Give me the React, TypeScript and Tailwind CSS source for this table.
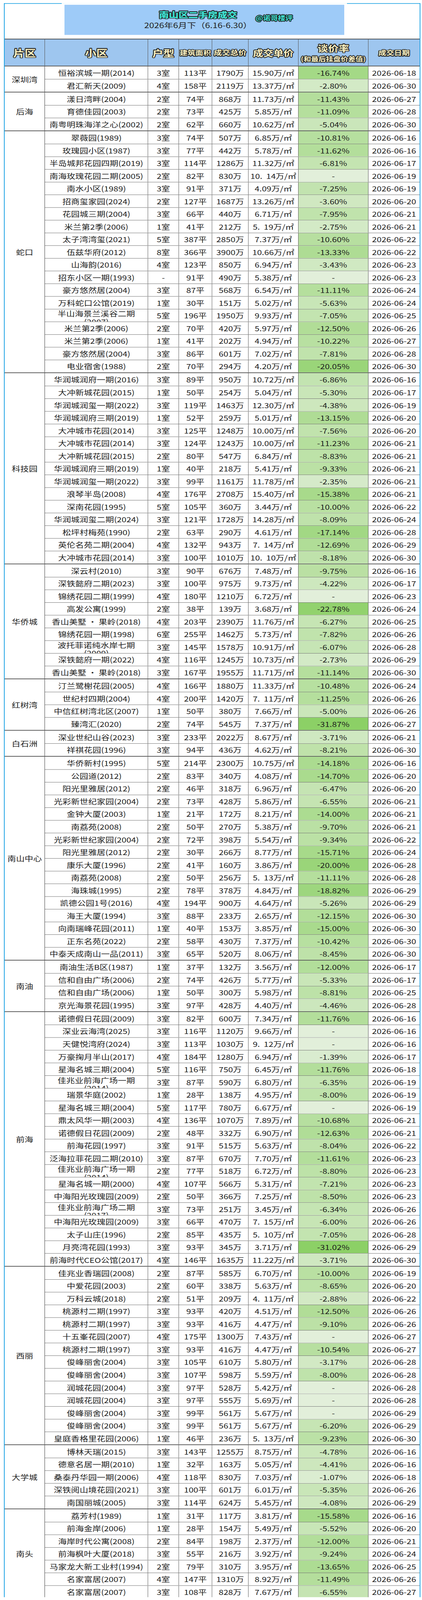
import clsx from "clsx";

// 片区 -> rows: 小区|户型|面积|总价|单价|谈价率|日
const GROUPS: { area: string; rows: string }[] = [
  {
    area: "深圳湾",
    rows: `
恒裕滨城一期(2014)|3室|113|1790|15.90|-16.74%|18
君汇新天(2009)|4室|158|2119|13.37|-2.80%|30`,
  },
  {
    area: "后海",
    rows: `
漾日湾畔(2004)|2室|74|868|11.73|-11.43%|27
育德佳园(2003)|2室|73|425|5.85|-11.09%|28
南粤明珠海洋之心(2002)|2室|62|660|10.62|-5.04%|30`,
  },
  {
    area: "蛇口",
    rows: `
翠薇园(1989)|3室|74|507|6.85|-10.81%|16
玫瑰园小区(1987)|3室|77|442|5.78|-11.62%|16
半岛城邦花园四期(2019)|3室|114|1286|11.32|-6.81%|17
南海玫瑰花园二期(2005)|2室|82|830|10.  14|-|19
南水小区(1989)|3室|91|371|4.09|-7.25%|19
招商玺家园(2024)|2室|127|1687|13.26|-3.60%|20
花园城三期(2004)|3室|66|440|6.71|-7.95%|21
米兰第2季(2006)|1室|41|212|5.  19|-2.75%|21
太子湾湾玺(2021)|5室|387|2850|7.37|-10.60%|22
伍兹华府(2012)|8室|366|3900|10.66|-13.33%|22
山海韵(2016)|4室|123|850|6.94|-3.43%|23
招东小区一期(1993)|-|91|490|5.38|-|23
豪方悠然居(2004)|3室|87|568|6.54|-11.11%|24
万科蛇口公馆(2019)|1室|30|151|5.02|-5.63%|24
半山海景兰溪谷二期(2007)|5室|196|1950|9.93|-7.05%|25
米兰第2季(2006)|2室|70|420|5.97|-12.50%|26
米兰第2季(2006)|1室|41|202|4.94|-10.22%|27
豪方悠然居(2004)|3室|86|601|7.02|-7.81%|28
电业宿舍(1988)|2室|70|294|4.20|-20.05%|30`,
  },
  {
    area: "科技园",
    rows: `
华润城润府一期(2016)|3室|89|950|10.72|-6.86%|16
大冲新城花园(2015)|1室|50|254|5.04|-5.30%|17
华润城润玺一期(2022)|3室|119|1463|12.30|-4.38%|19
华润城润府三期(2019)|1室|52|259|5.01|-13.15%|20
大冲城市花园(2014)|3室|125|1248|10.00|-7.56%|20
大冲城市花园(2014)|3室|124|1243|10.00|-11.23%|21
大冲新城花园(2015)|2室|80|547|6.84|-8.83%|21
华润城润府三期(2019)|1室|40|218|5.41|-9.33%|21
华润城润玺一期(2022)|3室|99|1161|11.78|-2.35%|21
浪琴半岛(2008)|4室|176|2708|15.40|-15.38%|21
深南花园(1995)|5室|105|360|3.44|-10.00%|22
华润城润玺二期(2024)|3室|121|1728|14.28|-8.09%|24
松坪村梅苑(1990)|2室|63|290|4.61|-17.14%|28
英伦名苑二期(2004)|4室|132|943|7.  14|-12.69%|29
大冲城市花园(2014)|3室|100|1010|10.  10|-8.18%|30`,
  },
  {
    area: "华侨城",
    rows: `
深云村(2010)|3室|90|676|7.48|-9.75%|16
深铁懿府二期(2023)|3室|100|975|9.73|-4.22%|17
锦绣花园二期(1999)|4室|180|1210|6.72|-|23
高发公寓(1999)|2室|38|139|3.68|-22.78%|24
香山美墅 · 果岭(2018)|4室|203|2390|11.76|-6.27%|25
锦绣花园一期(1998)|6室|255|1462|5.73|-7.82%|26
波托菲诺纯水岸七期(2009)|3室|145|1578|10.91|-6.07%|28
深铁懿府一期(2022)|4室|116|1245|10.73|-2.73%|29
香山美墅 · 果岭(2018)|3室|167|1955|11.71|-11.14%|30`,
  },
  {
    area: "红树湾",
    rows: `
汀兰鹭榭花园(2005)|4室|166|1880|11.33|-10.48%|24
世纪村四期(2004)|4室|200|1420|7.  11|-11.25%|26
中信红树湾北区(2007)|1室|50|380|7.66|-5.00%|26
臻湾汇(2020)|2室|74|545|7.37|-31.87%|27`,
  },
  {
    area: "白石洲",
    rows: `
深业世纪山谷(2023)|3室|233|2022|8.67|-3.71%|21
祥祺花园(1996)|3室|94|436|4.62|-8.21%|30`,
  },
  {
    area: "南山中心",
    rows: `
华侨新村(1995)|5室|214|2300|10.75|-14.18%|16
公园道(2012)|2室|83|340|4.08|-14.70%|20
阳光里雅居(2012)|2室|46|318|6.96|-6.47%|20
光彩新世纪家园(2004)|2室|73|428|5.86|-6.55%|21
金钟大厦(2003)|1室|21|172|8.21|-14.00%|21
南荔苑(2008)|2室|50|270|5.38|-9.70%|21
光彩新世纪家园(2004)|2室|72|398|5.54|-9.34%|22
阳光里雅居(2012)|2室|30|266|8.77|-15.71%|24
康乐大厦(1996)|2室|41|160|3.86|-20.00%|28
南荔苑(2008)|2室|50|256|5.  13|-11.11%|28
海珠城(1995)|2室|78|378|4.84|-18.82%|29
凯德公园1号(2016)|4室|194|900|4.64|-5.26%|29
海王大厦(1994)|3室|88|233|2.65|-12.15%|30
向南瑞峰花园(2011)|1室|40|153|3.85|-15.00%|30
正东名苑(2022)|2室|58|430|7.37|-10.42%|30
中泰天成南山一品(2011)|3室|65|520|8.06|-8.45%|30`,
  },
  {
    area: "南油",
    rows: `
南油生活B区(1987)|1室|37|132|3.56|-12.00%|17
信和自由广场(2006)|2室|74|426|5.77|-5.33%|17
信和自由广场(2006)|1室|50|300|5.98|-8.81%|25
京光海景花园(1995)|3室|97|428|4.40|-4.46%|28`,
  },
  {
    area: "前海",
    rows: `
诺德假日花园(2009)|3室|82|600|7.34|-11.76%|16
深业云海湾(2025)|3室|116|1120|9.66|-|16
天健悦湾府(2024)|3室|113|1030|9.  12|-|16
万豪掬月半山(2017)|4室|184|1280|6.94|-1.39%|17
星海名城三期(2004)|5室|116|750|6.45|-11.76%|18
佳兆业前海广场一期(2014)|3室|87|590|6.80|-6.35%|19
瑞景华庭(2002)|1室|28|138|4.95|-8.00%|19
星海名城三期(2004)|5室|117|780|6.67|-|19
鼎太风华一期(2003)|4室|136|1070|7.89|-10.68%|21
诺德假日花园(2009)|2室|48|332|6.90|-12.63%|21
前海花园(1997)|3室|91|515|5.63|-8.04%|22
泛海拉菲花园二期(2010)|3室|87|670|7.70|-11.61%|23
佳兆业前海广场一期(2014)|2室|77|518|6.72|-8.80%|23
星海名城一期(2000)|4室|107|566|5.31|-7.21%|23
中海阳光玫瑰园(2009)|2室|50|366|7.25|-8.50%|23
佳兆业前海广场二期(2017)|3室|73|251|3.45|-6.34%|26
中海阳光玫瑰园(2009)|3室|66|470|7.  15|-6.00%|26
太子山庄(1996)|2室|85|435|5.  10|-7.05%|28
月亮湾花园(1993)|3室|93|345|3.71|-31.02%|29
前海时代CEO公馆(2017)|4室|146|1635|11.22|-3.71%|30`,
  },
  {
    area: "西丽",
    rows: `
佳兆业香瑞园(2008)|2室|87|585|6.70|-10.00%|19
中爱花园(2003)|2室|60|338|5.63|-8.65%|20
万科云城(2018)|2室|51|209|4.  11|-2.88%|22
桃源村二期(1997)|3室|93|420|4.51|-12.50%|26
桃源村二期(1997)|3室|93|416|4.47|-9.10%|26
十五峯花园(2007)|4室|175|1300|7.43|-|27
桃源村二期(1997)|3室|93|416|4.47|-10.54%|27
俊峰丽舍(2004)|3室|105|610|5.80|-3.17%|28
俊峰丽舍(2004)|3室|107|598|5.59|-8.00%|28
润城花园(2004)|3室|97|528|5.42|-|28
润城花园(2004)|3室|97|555|5.69|-|28
俊峰丽舍(2004)|3室|99|561|5.67|-|29
俊峰丽舍(2004)|3室|99|561|5.67|-6.20%|29
皇庭香格里花园(2006)|1室|46|236|5.  13|-9.23%|30`,
  },
  {
    area: "大学城",
    rows: `
博林天瑞(2015)|3室|143|1255|8.75|-4.78%|16
德意名居一期(2010)|1室|32|163|5.05|-4.41%|16
桑泰丹华园一期(2006)|4室|118|830|7.03|-1.07%|18
深铁阅山境花园(2021)|3室|100|601|6.01|-5.35%|26
南国丽城(2005)|3室|114|624|5.45|-4.08%|29`,
  },
  {
    area: "南头",
    rows: `
荔芳村(1989)|1室|31|117|3.81|-15.58%|16
前海金岸(2006)|1室|28|154|5.49|-5.52%|20
海岸时代公寓(2008)|2室|84|198|2.37|-12.00%|21
前海枫叶大厦(2018)|3室|55|216|3.92|-9.24%|24
马家龙大新工业村(1994)|2室|79|310|3.95|-13.65%|25
名家富居(2007)|4室|147|1310|8.92|-11.49%|26
名家富居(2007)|3室|108|828|7.67|-6.55%|27`,
  },
];

const COLS = "grid-cols-[264px_79px_85px_93px_128px_179px_131px]";

const OUTLINE =
  "[text-shadow:2px_0_#1f1f1f,-2px_0_#1f1f1f,0_2px_#1f1f1f,0_-2px_#1f1f1f,1.5px_1.5px_#1f1f1f,-1.5px_-1.5px_#1f1f1f,1.5px_-1.5px_#1f1f1f,-1.5px_1.5px_#1f1f1f,0_0_4px_#00000080]";

// green scale, lighter for small discounts, "-" gets the lightest
function rateColor(rate: string) {
  const v = Math.abs(parseFloat(rate));
  const t = isNaN(v) ? 0 : Math.pow(Math.min(1, v / 25), 0.8);
  const mix = (a: number, b: number) => Math.round(a + (b - a) * t);
  return `rgb(${mix(226, 140)}, ${mix(239, 208)}, ${mix(218, 102)})`;
}

function cjkCount(s: string) {
  return Array.from(s).filter((c) => c.charCodeAt(0) > 0x2e80).length;
}

function Row({ cells, first }: { cells: string[]; first: boolean }) {
  const [name, room, size, total, unit, rate, day] = cells;
  const wraps = cjkCount(name) >= 9;
  const cell = "flex items-center justify-center border-r border-[#5a5a5a] whitespace-nowrap overflow-hidden";
  return (
    <div className={clsx("grid h-[40px] grid-rows-1 overflow-hidden", COLS, !first && "border-t border-[#555]")}>
      <div
        className={clsx(
          "overflow-hidden border-r border-[#5a5a5a] px-[7px] text-center",
          wraps ? "pt-[1px] leading-[25px]" : "flex items-center justify-center whitespace-nowrap"
        )}
      >
        {name}
      </div>
      <div className={cell}>{room}</div>
      <div className={cell}>{size}平</div>
      <div className={cell}>{total}万</div>
      <div className={clsx(cell, "whitespace-pre")}>{unit}万/㎡</div>
      <div className={cell} style={{ backgroundColor: rateColor(rate) }}>
        {rate}
      </div>
      <div className="flex items-center justify-center overflow-hidden whitespace-nowrap">2026-06-{day}</div>
    </div>
  );
}

function Header() {
  const th = "flex items-center justify-center border-r border-[#555] font-bold text-[#fdf3c4] " + OUTLINE;
  return (
    <div className="grid h-[85px] grid-cols-[103px_264px_79px_85px_93px_128px_179px_131px] border-t-2 border-[#3c3c3c] bg-[#9ec6ef]">
      <div className={clsx(th, "text-[29px]")}>片区</div>
      <div className={clsx(th, "text-[29px]")}>小区</div>
      <div className={clsx(th, "text-[28px]")}>户型</div>
      <div className={clsx(th, "text-[20px]")}>建筑面积</div>
      <div className={clsx(th, "text-[21px]")}>成交总价</div>
      <div className={clsx(th, "text-[26px]")}>成交单价</div>
      <div className={clsx(th, "flex-col")}>
        <span className="text-[27px] leading-[30px]">谈价率</span>
        <span className="mt-[8px] text-[19px] leading-[22px]">(和最后挂盘价差值)</span>
      </div>
      <div className={clsx(th, "border-r-0 text-[20px]")}>成交日期</div>
    </div>
  );
}

export default function App() {
  return (
    // the capture only takes the top 4096px of the window, so the
    // 5039px sheet is squeezed to fit it
    <div className="h-[4096px] w-[1080px] overflow-hidden bg-white">
      <div className="h-[5039px] w-[1080px] origin-top scale-y-[0.81286]">
        <div className="h-[5030px] w-[1080px] overflow-hidden bg-white font-['Noto_Sans_CJK_SC',sans-serif] text-[22px] text-[#1c1c1c]">
          <div className="ml-[10px] mt-[10px] w-[1066px] border-x-2 border-t-2 border-[#22a4e4]">
            {/* title card sits over the top border */}
            <div className="-mt-[2px] mb-[12px] ml-[146px] w-[730px] bg-white px-[7px] pt-[5px]">
              <div className="flex h-[95px] flex-col items-center bg-[#9ecbf8] pr-[32px] pt-[17px]">
                <div className="relative">
                  <span className={clsx("block text-[25px] leading-[26px] font-black text-[#3fe3d4]", OUTLINE)}>
                    南山区二手房成交
                  </span>
                  <span
                    className={clsx(
                      "absolute left-full top-[13px] ml-[47px] whitespace-nowrap text-[19px] leading-[22px] font-bold text-[#3fe3d4]",
                      OUTLINE
                    )}
                  >
                    @诺哥楼评
                  </span>
                </div>
                <div className="mt-[8px] text-[23px] leading-[24px] text-[#222]">2026年6月下（6.16-6.30）</div>
              </div>
            </div>

            <Header />

            {GROUPS.map((g) => {
              const rows = g.rows.split("\n").filter(Boolean).map((l) => l.split("|"));
              return (
                <div key={g.area} className="flex border-t-2 border-[#3c3c3c]">
                  <div className="flex w-[103px] shrink-0 items-center justify-center border-r border-[#3c3c3c]">
                    {g.area}
                  </div>
                  <div className="flex-1">
                    {rows.map((r, i) => (
                      <Row key={i} cells={r} first={i === 0} />
                    ))}
                  </div>
                </div>
              );
            })}
          </div>
        </div>
      </div>
    </div>
  );
}
